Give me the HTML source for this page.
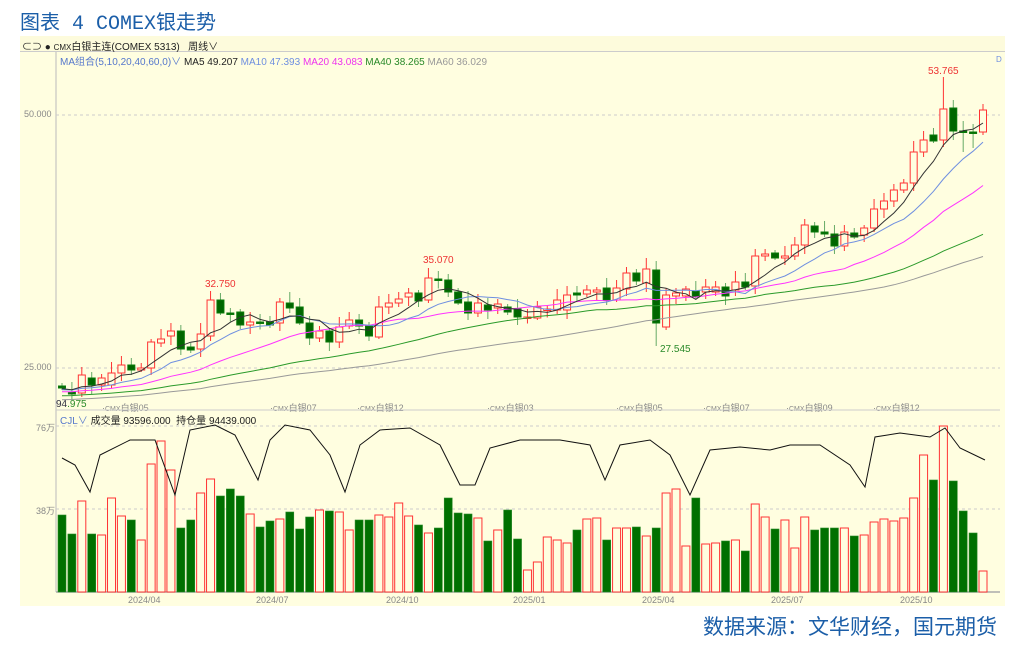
<!DOCTYPE html>
<html><head><meta charset="utf-8"><style>
body{margin:0;width:1012px;height:646px;background:#fff;overflow:hidden;font-family:"Liberation Sans","Noto Sans CJK SC",sans-serif;position:relative}
.t{position:absolute;white-space:nowrap}
</style></head><body>
<div class="t" style="left:20px;top:6px;font-size:20px;color:#1b5ea8;font-family:'Liberation Mono','Noto Sans CJK SC',monospace;letter-spacing:0px">图表 4 COMEX<span style="font-family:'Noto Sans CJK SC',sans-serif">银走势</span></div>
<div style="position:absolute;left:20px;top:36px;width:985px;height:570px;background:#fffee0"></div>
<div style="position:absolute;left:20px;top:36px;width:985px;height:15px;background:#fdfbdc;border-bottom:1px solid #ccc"></div>
<div class="t" style="left:22px;top:38px;font-size:10px;color:#222">⊂⊃ ● <span style="font-size:8px">CMX</span>白银主连(COMEX 5313)&nbsp;&nbsp;&nbsp;周线∨</div>
<div class="t" style="left:60px;top:53px;font-size:10px;color:#5577cc">MA组合(5,10,20,40,60,0)∨ <span style="color:#222">MA5 49.207</span> <span style="color:#6f8fe0">MA10 47.393</span> <span style="color:#ee33ee">MA20 43.083</span> <span style="color:#2a8a2a">MA40 38.265</span> <span style="color:#999">MA60 36.029</span></div>
<div class="t" style="left:996px;top:55px;font-size:8px;color:#6f8fe0">D</div>
<div class="t" style="left:24px;top:109px;font-size:9px;color:#888">50.000</div>
<div class="t" style="left:24px;top:362px;font-size:9px;color:#888">25.000</div>
<div class="t" style="left:205px;top:279px;font-size:10px;color:#e33">32.750</div>
<div class="t" style="left:423px;top:255px;font-size:10px;color:#e33">35.070</div>
<div class="t" style="left:928px;top:66px;font-size:10px;color:#e33">53.765</div>
<div class="t" style="left:660px;top:344px;font-size:10px;color:#2a8a2a">27.545</div>
<div class="t" style="left:56px;top:399px;font-size:10px;color:#2a8a2a"><span style="color:#334">94</span>.975</div>
<div class="t" style="left:102px;top:401px;font-size:9px;color:#888">·<span style="font-size:7px">CMX</span>白银05</div>
<div class="t" style="left:270px;top:401px;font-size:9px;color:#888">·<span style="font-size:7px">CMX</span>白银07</div>
<div class="t" style="left:357px;top:401px;font-size:9px;color:#888">·<span style="font-size:7px">CMX</span>白银12</div>
<div class="t" style="left:487px;top:401px;font-size:9px;color:#888">·<span style="font-size:7px">CMX</span>白银03</div>
<div class="t" style="left:616px;top:401px;font-size:9px;color:#888">·<span style="font-size:7px">CMX</span>白银05</div>
<div class="t" style="left:703px;top:401px;font-size:9px;color:#888">·<span style="font-size:7px">CMX</span>白银07</div>
<div class="t" style="left:786px;top:401px;font-size:9px;color:#888">·<span style="font-size:7px">CMX</span>白银09</div>
<div class="t" style="left:873px;top:401px;font-size:9px;color:#888">·<span style="font-size:7px">CMX</span>白银12</div>
<div class="t" style="left:60px;top:412px;font-size:10px;color:#222"><span style="color:#5577cc">CJL∨</span> 成交量 93596.000&nbsp; 持仓量 94439.000</div>
<div class="t" style="left:36px;top:421px;font-size:9px;color:#888">76万</div>
<div class="t" style="left:36px;top:504px;font-size:9px;color:#888">38万</div>
<div class="t" style="left:128px;top:595px;font-size:9px;color:#888">2024/04</div>
<div class="t" style="left:256px;top:595px;font-size:9px;color:#888">2024/07</div>
<div class="t" style="left:386px;top:595px;font-size:9px;color:#888">2024/10</div>
<div class="t" style="left:513px;top:595px;font-size:9px;color:#888">2025/01</div>
<div class="t" style="left:642px;top:595px;font-size:9px;color:#888">2025/04</div>
<div class="t" style="left:771px;top:595px;font-size:9px;color:#888">2025/07</div>
<div class="t" style="left:900px;top:595px;font-size:9px;color:#888">2025/10</div>
<div class="t" style="left:703px;top:611px;font-size:21px;color:#1b5ea8;font-family:'Noto Sans CJK SC',sans-serif">数据来源：文华财经，国元期货</div>
<svg id="s" width="1012" height="646" style="position:absolute;left:0;top:0">
<line x1="56" y1="52" x2="56" y2="592" stroke="#bbb"/>
<line x1="56" y1="410" x2="1000" y2="410" stroke="#ccc"/>
<line x1="56" y1="592" x2="1000" y2="592" stroke="#aaa" stroke-width="1.5"/>
<line x1="56" y1="115" x2="1000" y2="115" stroke="#ccc" stroke-dasharray="3,3"/>
<line x1="56" y1="368" x2="1000" y2="368" stroke="#ccc" stroke-dasharray="3,3"/>
<line x1="56" y1="426" x2="1000" y2="426" stroke="#ccc" stroke-dasharray="3,3"/>
<line x1="56" y1="509" x2="1000" y2="509" stroke="#ccc" stroke-dasharray="3,3"/>
<g id="g"></g>
</svg>
<script>
var C=[[0,386,388],[0,392,394],[0,393,375],[0,378,385],[0,385,378],[0,385,373],[0,373,365],[0,365,370],[0,370,368],[0,368,342],[0,343,339],[0,336,331],[0,331,349],[0,347,350],[0,349,334],[0,336,300],[0,300,313],[0,313,314],[0,312,325],[0,325,322],[0,322,323],[0,322,325],[0,323,302],[0,303,308],[0,307,323],[0,323,338],[0,338,331],[0,331,342],[0,342,327],[0,326,320],[0,320,326],[0,326,336],[0,337,307],[0,307,303],[0,303,299],[0,297,293],[0,293,301],[0,300,278],[0,279,280],[0,280,292],[0,292,303],[0,302,313],[0,313,303],[0,305,310],[0,308,304],[0,307,312],[0,309,317],[0,318,317],[0,318,307],[0,310,309],[0,310,300],[0,310,295],[0,293,295],[0,294,290],[0,292,290],[0,288,300],[0,300,288],[0,289,273],[0,273,281],[0,283,269],[0,270,323],[0,327,295],[0,296,293],[0,296,289],[0,291,297],[0,292,287],[0,292,287],[0,287,296],[0,290,282],[0,282,287],[0,286,256],[0,256,254],[0,253,258],[0,258,256],[0,256,245],[0,245,225],[0,226,232],[0,232,234],[0,234,246],[0,246,232],[0,233,237],[0,235,228],[0,228,209],[0,209,201],[0,201,190],[0,190,183],[0,183,152],[0,152,140],[0,135,141],[0,140,109],[0,108,131],[0,131,132],[0,132,133],[0,132,110]];
var n=C.length;for(var i=0;i<n;i++)C[i][0]=62+i*(983-62)/(n-1);
var V=[515,534,501,534,535,498,516,520,540,464,441,470,528,520,493,479,496,489,496,514,527,521,519,512,529,517,510,511,512,530,520,515,517,503,516,525,533,528,498,513,514,518,541,530,510,539,570,562,537,540,543,530,519,518,540,528,528,527,536,528,493,489,546,498,544,543,541,540,551,504,517,529,520,548,517,530,528,528,528,536,535,522,519,521,518,498,455,480,426,481,511,533,571];
while(V.length<n)V.splice(30,0,520);
var s='',w=7;
function ma(k,col){var p=[];for(var i=0;i<n;i++){var sm=0;for(var j=i-k+1;j<=i;j++){sm+=(j<0?388+(j*-0.4):C[j][2]);}p.push(C[i][0].toFixed(1)+','+(sm/k).toFixed(1));}return '<polyline points="'+p.join(' ')+'" fill="none" stroke="'+col+'" stroke-width="1"/>';}
for(var i=0;i<n;i++){var x=C[i][0],o=C[i][1],c=C[i][2],up=c<o,t=Math.min(o,c),b=Math.max(o,c);if(b-t<1.5){b=t+1.5}
var hi=t-(3+(i*7)%9),lo=b+(2+(i*5)%8);
if(i==89)hi=77; if(i==90){hi=100;lo=140;} if(i==91)lo=152; if(i==92)lo=148; if(i==60)lo=346;
if(up){s+='<line x1="'+x+'" y1="'+hi+'" x2="'+x+'" y2="'+lo+'" stroke="#f33"/><rect x="'+(x-w/2)+'" y="'+t+'" width="'+w+'" height="'+(b-t)+'" fill="#fffee0" stroke="#f33"/>';}
else{s+='<line x1="'+x+'" y1="'+hi+'" x2="'+x+'" y2="'+lo+'" stroke="#6a6"/><rect x="'+(x-w/2)+'" y="'+t+'" width="'+w+'" height="'+(b-t)+'" fill="#060" stroke="#0a7a0a"/>';}
var v=V[i]||540,bw=8;
if(up)s+='<rect x="'+(x-bw/2)+'" y="'+v+'" width="'+bw+'" height="'+(592-v)+'" fill="#fffee0" stroke="#f33"/>';
else s+='<rect x="'+(x-bw/2)+'" y="'+v+'" width="'+bw+'" height="'+(592-v)+'" fill="#007000" stroke="#2a8a2a" stroke-width=".6"/>';}
s+=ma(60,'#999')+ma(40,'#2a9a2a')+ma(20,'#f3f')+ma(10,'#6f8fe0')+ma(5,'#333');
s+='<polyline points="62,458 75,465 90,492 100,455 130,440 155,440 175,495 190,430 215,425 235,435 258,480 270,440 285,425 310,430 330,455 345,492 360,445 380,430 410,428 440,445 460,485 475,485 490,448 520,440 560,440 590,445 605,480 620,445 650,440 670,455 690,495 710,450 740,447 770,450 790,445 820,445 850,465 865,487 875,437 900,433 930,437 945,428 960,448 985,460" fill="none" stroke="#111" stroke-width="1"/>';
document.getElementById('g').innerHTML=s;
</script>
</body></html>
